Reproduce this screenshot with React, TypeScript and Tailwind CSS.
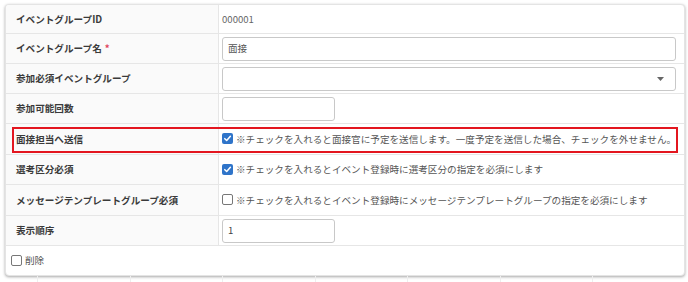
import React from "react";

const font = { fontFamily: '"Noto Sans CJK JP", "Noto Sans", sans-serif' };

function Check({ checked }: { checked: boolean }) {
  if (checked) {
    return (
      <span className="inline-flex h-[11px] w-[11px] shrink-0 items-center justify-center rounded-[2px] bg-[#2f74c9]">
        <svg width="9" height="9" viewBox="0 0 10 10">
          <path d="M2 5.2 L4.1 7.2 L8.2 2.6" fill="none" stroke="white" strokeWidth="1.7" strokeLinecap="round" strokeLinejoin="round" />
        </svg>
      </span>
    );
  }
  return <span className="inline-block h-[11px] w-[11px] shrink-0 rounded-[2px] border border-[#777] bg-white" />;
}

function Row({ label, children, required, h = "h-[30px]", highlight }: { label: string; children?: React.ReactNode; required?: boolean; h?: string; highlight?: boolean }) {
  return (
    <div className={`relative grid grid-cols-[213px_1fr] border-b border-[#e6e6e6] ${h}`}>
      <div className="flex items-center border-r border-[#e6e6e6] bg-[#fafafa] pl-[10px] text-[9.6px] font-bold text-[#3a3a3a]">
        {label}
        {required && <span className="ml-[3px] text-[#e0445a]">*</span>}
      </div>
      <div className="flex items-center whitespace-nowrap pl-[3px] pr-[8px] text-[9.6px] text-[#555]">{children}</div>
      {highlight && (
        <div className="pointer-events-none absolute left-[6px] right-[6px] top-[3px] bottom-[1px] border-2 border-[#e3161f]" />
      )}
    </div>
  );
}

export default function App() {
  return (
    <div className="h-[282px] w-[688px] overflow-hidden bg-white" style={font}>
      <div className="pl-[5px] pt-[4px]">
        <div className="w-[680px] overflow-hidden rounded-[4px] border border-[#e4e4e4] bg-white shadow-[0_1px_3px_rgba(0,0,0,0.35)]">
          <Row label="イベントグループID" h="h-[29px]">
            <span className="text-[#666]">000001</span>
          </Row>
          <Row label="イベントグループ名" required>
            <div className="flex h-[24px] w-full items-center rounded-[3px] border border-[#c8c8c8] px-[5px] text-[#555]">面接</div>
          </Row>
          <Row label="参加必須イベントグループ">
            <div className="flex h-[24px] w-full items-center justify-end rounded-[3px] border border-[#c8c8c8] pr-[11px]">
              <svg width="7" height="4" viewBox="0 0 7 4">
                <path d="M0 0 L7 0 L3.5 4 Z" fill="#666" />
              </svg>
            </div>
          </Row>
          <Row label="参加可能回数">
            <div className="h-[24px] w-[113px] rounded-[3px] border border-[#c8c8c8]" />
          </Row>
          <Row label="面接担当へ送信" h="h-[31px]" highlight>
            <div className="flex items-center gap-[3px]">
              <Check checked />
              <span>※チェックを入れると面接官に予定を送信します。一度予定を送信した場合、チェックを外せません。</span>
            </div>
          </Row>
          <Row label="選考区分必須">
            <div className="flex items-center gap-[3px]">
              <Check checked />
              <span>※チェックを入れるとイベント登録時に選考区分の指定を必須にします</span>
            </div>
          </Row>
          <Row label="メッセージテンプレートグループ必須" h="h-[31px]">
            <div className="flex items-center gap-[3px]">
              <Check checked={false} />
              <span>※チェックを入れるとイベント登録時にメッセージテンプレートグループの指定を必須にします</span>
            </div>
          </Row>
          <Row label="表示順序">
            <div className="flex h-[24px] w-[113px] items-center rounded-[3px] border border-[#c8c8c8] px-[5px] text-[#444]">1</div>
          </Row>
          <div className="flex h-[29px] items-center gap-[3px] pl-[5px] text-[9.6px] text-[#555]">
            <Check checked={false} />
            <span>削除</span>
          </div>
        </div>
        <div className="flex h-[10px] pl-[32px]">
          {[0, 1, 2, 3, 4, 5, 6].map((i) => (
            <div key={i} className="w-[92.5px] shrink-0 border-l border-[#eeeeee]" />
          ))}
        </div>
      </div>
    </div>
  );
}
